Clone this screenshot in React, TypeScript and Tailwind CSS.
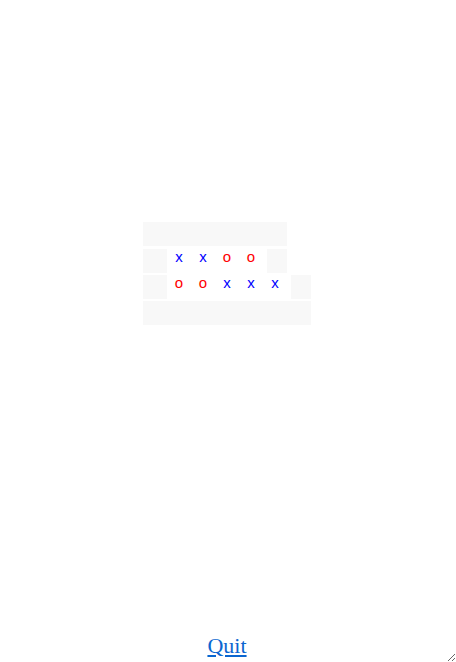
import React from "react";

type Piece = "x" | "o";

function Cell({ p }: { p: Piece }) {
  return (
    <div
      className={
        p === "x"
          ? "w-6 h-6 text-center text-[15px] leading-[16px] text-[#0000ff]"
          : "w-6 h-6 text-center text-[15px] leading-[16px] text-[#ff0000]"
      }
      style={{ fontFamily: '"Liberation Sans", Arial, sans-serif' }}
    >
      {p}
    </div>
  );
}

export default function App() {
  const row2: Piece[] = ["x", "x", "o", "o"];
  const row3: Piece[] = ["o", "o", "x", "x", "x"];
  return (
    <div className="w-[456px] h-[662px] bg-white resize overflow-auto flex flex-col">
      <div className="pt-[222px] pl-[143px] flex flex-col">
        <div className="w-[144px] h-6 bg-[#f8f8f8]" />
        <div className="mt-[3px] flex h-6">
          <div className="w-6 h-6 bg-[#f8f8f8]" />
          {row2.map((p, i) => (
            <Cell key={i} p={p} />
          ))}
          <div className="w-1" />
          <div className="w-5 h-6 bg-[#f8f8f8]" />
        </div>
        <div className="mt-[2px] flex h-6">
          <div className="w-6 h-6 bg-[#f8f8f8]" />
          {row3.map((p, i) => (
            <Cell key={i} p={p} />
          ))}
          <div className="w-1" />
          <div className="w-5 h-6 bg-[#f8f8f8]" />
        </div>
        <div className="mt-[2px] w-[168px] h-6 bg-[#f8f8f8]" />
      </div>
      <div className="mt-auto pb-[1px] flex justify-center pr-[2px]">
        <a
          href="#"
          className="text-[22px] leading-[31px] text-[#0b66d0] underline"
          style={{ fontFamily: '"Liberation Serif", "Times New Roman", serif' }}
        >
          Quit
        </a>
      </div>
    </div>
  );
}
